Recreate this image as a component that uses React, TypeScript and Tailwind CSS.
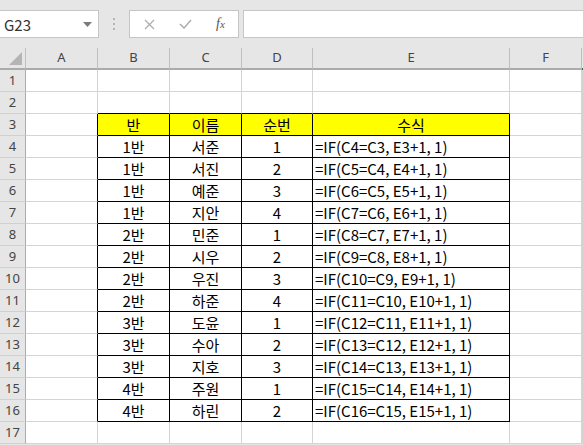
import React from 'react';

const cols = ['A', 'B', 'C', 'D', 'E', 'F', 'G'];

const data: [string, string, number][] = [
  ['1반', '서준', 1],
  ['1반', '서진', 2],
  ['1반', '예준', 3],
  ['1반', '지안', 4],
  ['2반', '민준', 1],
  ['2반', '시우', 2],
  ['2반', '우진', 3],
  ['2반', '하준', 4],
  ['3반', '도윤', 1],
  ['3반', '수아', 2],
  ['3반', '지호', 3],
  ['4반', '주원', 1],
  ['4반', '하린', 2],
];

// table occupies rows 3..16, cols B..E (index 1..4)
const inTable = (r: number, c: number) => r >= 3 && r <= 16 && c >= 1 && c <= 4;

function cellText(r: number, c: number): string {
  if (r === 3) return ['', '반', '이름', '순번', '수식', '', ''][c];
  if (r >= 4 && r <= 16) {
    const d = data[r - 4];
    if (c === 1) return d[0];
    if (c === 2) return d[1];
    if (c === 3) return String(d[2]);
    if (c === 4) return `=IF(C${r}=C${r - 1}, E${r - 1}+1, 1)`;
  }
  return '';
}

function Cell({ r, c }: { r: number; c: number }) {
  const t = inTable(r, c);
  const blackRight = t || inTable(r, c + 1);
  const blackBottom = t || inTable(r + 1, c);
  const text = cellText(r, c);
  return (
    <div
      className={`h-[22px] border-r border-b flex items-center text-[15px] leading-none text-black ${
        r === 3 && t ? 'bg-[#ffff00]' : 'bg-white'
      } ${blackRight ? 'border-r-black' : 'border-r-[#d4d4d4]'} ${
        blackBottom ? 'border-b-black' : 'border-b-[#d4d4d4]'
      } ${c === 4 && r >= 4 ? 'justify-start pl-[2px]' : 'justify-center'}`}
    >
      {text}
    </div>
  );
}

export default function App() {
  const rows = Array.from({ length: 17 }, (_, i) => i + 1);
  return (
    <div
      className="w-[583px] h-[445px] overflow-hidden bg-[#e6e6e6] select-none"
      style={{ fontFamily: '"Noto Sans CJK KR", "Noto Sans", sans-serif' }}
    >
      {/* Formula bar */}
      <div className="h-[48px] flex items-start pt-[10px]">
        <div className="w-[99px] h-[28px] bg-white border border-l-0 border-[#c6c6c6] flex items-center justify-between pl-[4px] pr-[6px]">
          <span className="text-[15px] text-[#333] leading-none">G23</span>
          <svg width="9" height="5" viewBox="0 0 9 5">
            <path d="M0 0 L9 0 L4.5 5 Z" fill="#7a7a7a" />
          </svg>
        </div>
        <div className="w-[30px] h-[28px] flex flex-col items-center justify-center gap-[3px]">
          <span className="w-[2px] h-[2px] bg-[#b5b5b5]" />
          <span className="w-[2px] h-[2px] bg-[#b5b5b5]" />
          <span className="w-[2px] h-[2px] bg-[#b5b5b5]" />
        </div>
        <div className="w-[110px] h-[28px] bg-white border border-[#c6c6c6] flex items-center">
          <div className="w-[37px] flex justify-center pl-[2px]">
            <svg width="11" height="11" viewBox="0 0 11 11">
              <path d="M1 1 L10 10 M10 1 L1 10" stroke="#b0b0b0" strokeWidth="1.4" />
            </svg>
          </div>
          <div className="w-[36px] flex justify-center">
            <svg width="13" height="10" viewBox="0 0 13 10">
              <path d="M1 5 L5 9 L12 1" stroke="#b0b0b0" strokeWidth="1.6" fill="none" />
            </svg>
          </div>
          <div className="w-[35px] flex justify-center">
            <span
              className="text-[14px] italic text-[#555] leading-none"
              style={{ fontFamily: '"Liberation Serif", serif' }}
            >
              f<span className="text-[11px]">x</span>
            </span>
          </div>
        </div>
        <div className="ml-[4px] flex-1 h-[28px] bg-white border border-r-0 border-[#c6c6c6]" />
      </div>

      {/* Sheet grid */}
      <div className="grid grid-cols-[26px_72px_72px_72px_71px_197px_72px_1fr]">
        {/* corner */}
        <div className="h-[22px] bg-[#e6e6e6] border-r border-b-2 border-r-[#bfbfbf] border-b-[#ababab] flex items-end justify-end p-[3px]">
          <svg width="13" height="13" viewBox="0 0 13 13">
            <path d="M13 0 L13 13 L0 13 Z" fill="#b4b4b4" />
          </svg>
        </div>
        {cols.map((c, i) => (
          <div
            key={c}
            className={`h-[22px] bg-[#e6e6e6] border-b-2 flex items-center justify-center text-[13px] text-[#444] ${
              i < 6 ? 'border-r border-r-[#bfbfbf]' : ''
            } ${c === 'G' ? 'border-b-[#217346]' : 'border-b-[#ababab]'}`}
            style={{ fontFamily: '"Noto Sans", sans-serif' }}
          >
            {c === 'G' ? '' : c}
          </div>
        ))}
        {rows.map((r) => (
          <React.Fragment key={r}>
            <div
              className="h-[22px] bg-[#e6e6e6] border-r border-b border-r-[#ababab] border-b-[#d0d0d0] flex items-center justify-center text-[13px] text-[#444]"
              style={{ fontFamily: '"Noto Sans", sans-serif' }}
            >
              {r}
            </div>
            {cols.map((_, c) => (
              <Cell key={c} r={r} c={c} />
            ))}
          </React.Fragment>
        ))}
      </div>
    </div>
  );
}
